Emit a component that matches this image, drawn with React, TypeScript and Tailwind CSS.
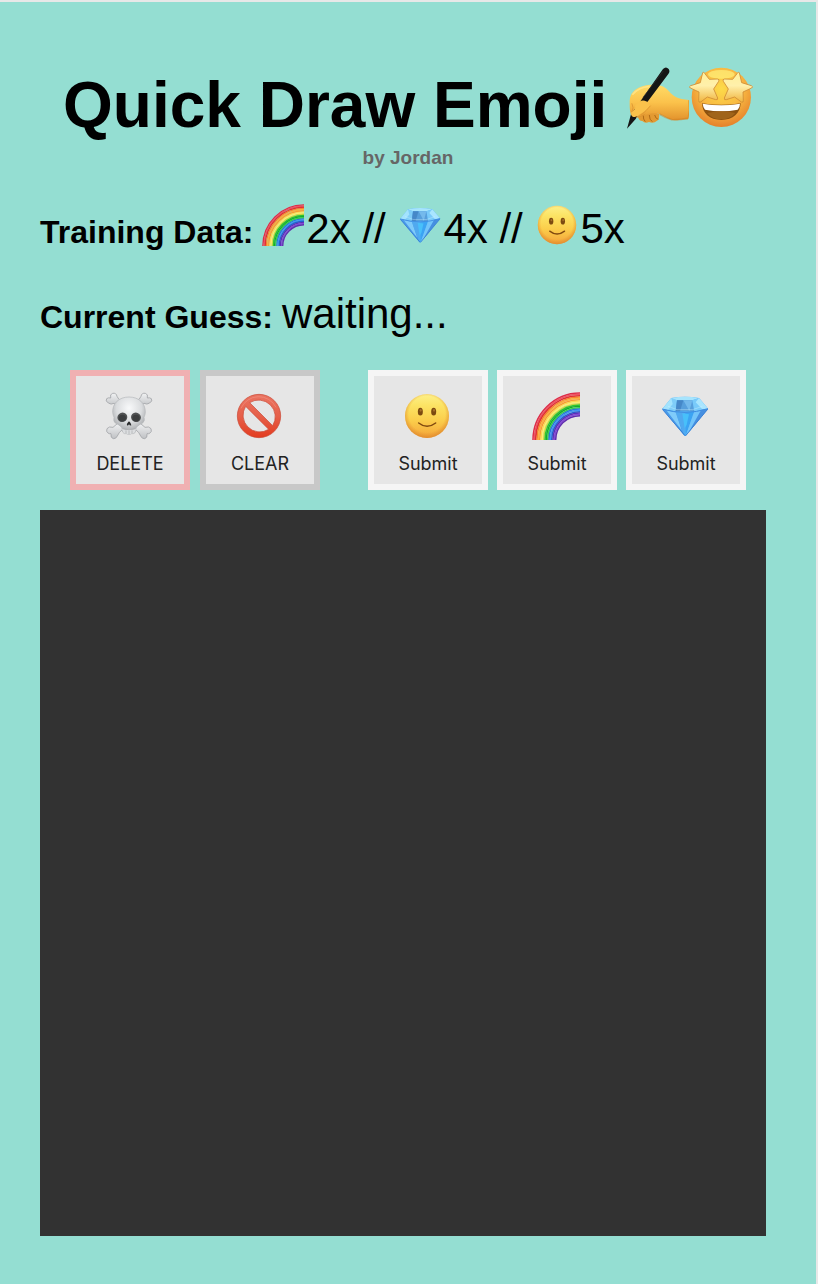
import { useId, type ReactNode } from "react";

type IconProps = { className?: string };

function Smile({ className = "" }: IconProps) {
  const id = useId();
  return (
    <svg viewBox="129 96 144 144" className={className} role="img" aria-label="Smile">
      <defs>
        <linearGradient id={id} x1="0" y1="0" x2="0" y2="1">
          <stop offset="0" stopColor="#fdf08a" />
          <stop offset="0.25" stopColor="#fce465" />
          <stop offset="0.6" stopColor="#fbce4b" />
          <stop offset="1" stopColor="#f3a33a" />
        </linearGradient>
        <radialGradient id={id + "e"} cx="0.5" cy="0.46" r="0.55">
          <stop offset="0.75" stopColor="#e0872a" stopOpacity="0" />
          <stop offset="1" stopColor="#d9822b" stopOpacity="0.75" />
        </radialGradient>
      </defs>
      <circle cx="201" cy="168" r="66" fill={`url(#${id})`} />
      <circle cx="201" cy="168" r="66" fill={`url(#${id}e)`} />
      <ellipse cx="181" cy="155" rx="7.5" ry="11.5" fill="#7c4a10" />
      <ellipse cx="221" cy="155" rx="7.5" ry="11.5" fill="#7c4a10" />
      <ellipse cx="182" cy="151" rx="3" ry="4" fill="#a8702a" />
      <ellipse cx="222" cy="151" rx="3" ry="4" fill="#a8702a" />
      <path d="M176 189Q201 209 227 189" fill="none" stroke="#80490f" strokeWidth="4.5" strokeLinecap="round" />
    </svg>
  );
}

const bands = [
  "#dc2c48", "#ef5362", "#e02d35", "#f5822f", "#fbb040", "#f79a32", "#fdd850", "#fdec74", "#c9dc45",
  "#2fc432", "#17aa2c", "#35cf49", "#2876d8", "#3f96f3", "#2260d0", "#5a2fb4", "#8448d8", "#5f2cae",
];

function Rainbow({ className = "" }: IconProps) {
  return (
    <svg viewBox="516 96 144 144" className={className} role="img" aria-label="Rainbow">
      {bands.map((color, i) => {
        const r = 141 - i * 4;
        return (
          <path
            key={color}
            d={`M${660 - r} 240A${r} ${r} 0 0 1 660 ${240 - r}`}
            fill="none"
            stroke={color}
            strokeWidth="4.6"
          />
        );
      })}
    </svg>
  );
}

function Gem({ className = "" }: IconProps) {
  return (
    <svg viewBox="183 96 144 144" className={className} role="img" aria-label="Diamond">
      <path d="M187 147L214 114Q255 106 297 114L324 146L257 228H254Z" fill="#56b0f4" />
      <path d="M187 147L214 114L231 121L227 154Z" fill="#7fcdf8" />
      <path d="M214 114Q255 106 297 114L277 121H231Z" fill="#a6e4fd" />
      <path d="M231 121H277L283 154H227Z" fill="#579fdc" />
      <path d="M277 121L297 114L324 146L283 154Z" fill="#79cafa" />
      <path d="M231 121L250 121L240 154H227Z" fill="#4688c8" />
      <path d="M250 121H277L268 154Q260 138 250 121Z" fill="#74b9ec" />
      <path d="M297 114L324 146L306 147L287 127Z" fill="#a9e5ff" />
      <path d="M187 147L214 114L218 132L204 150Z" fill="#a3e3fd" />
      <path d="M187 147L227 156L254 228Z" fill="#4a9ae9" />
      <path d="M199 151L227 157L245 211Z" fill="#7fcbfa" />
      <path d="M227 155L255 161L254 228Z" fill="#50a9ef" />
      <path d="M255 160L283 154L257 228Z" fill="#3ba4f3" />
      <path d="M247 160L267 163L260 194L254 205Z" fill="#48c0fa" />
      <path d="M283 154L324 146L257 228Z" fill="#73c5fa" />
      <path d="M303 151L324 146L266 217Z" fill="#468fe0" />
      <path d="M187 147Q255 168 324 146" fill="none" stroke="#3f8ce0" strokeWidth="3" />
      <path d="M188 149L255 227M323 148L257 227" fill="none" stroke="#3278d0" strokeWidth="2.5" />
      <path d="M204 139L231 149L278 149L307 139" fill="none" stroke="#d0f4ff" strokeWidth="2" opacity="0.6" />
    </svg>
  );
}

function Skull({ className = "" }: IconProps) {
  const id = useId();
  return (
    <svg viewBox="24 22 144 144" className={className} role="img" aria-label="Skull">
      <defs>
        <radialGradient id={id} cx="0.5" cy="0.3" r="0.7">
          <stop offset="0" stopColor="#f8f9fa" />
          <stop offset="0.55" stopColor="#dadcde" />
          <stop offset="1" stopColor="#97999c" />
        </radialGradient>
        <linearGradient id={id + "b"} x1="0" y1="0" x2="0" y2="1">
          <stop offset="0" stopColor="#f1f2f3" />
          <stop offset="1" stopColor="#bfc1c4" />
        </linearGradient>
      </defs>
      <g fill={`url(#${id}b)`} stroke="#a2a5a8" strokeWidth="2.5" strokeLinejoin="round">
        <path d="M65 66L51 56Q42 61 34 55Q24 49 29 42Q34 38 41 40Q38 28 47 26Q58 24 60 35Q63 43 75 52Z" />
        <path d="M127 66L141 56Q150 61 158 55Q168 49 163 42Q158 38 151 40Q154 28 145 26Q134 24 132 35Q129 43 117 52Z" />
        <path d="M62 116L48 128Q36 124 30 132Q26 141 34 146Q38 148 42 147Q40 160 49 162Q57 163 61 154Q64 144 79 132Z" />
        <path d="M130 116L144 128Q156 124 162 132Q166 141 158 146Q154 148 150 147Q152 160 143 162Q135 163 131 154Q128 144 113 132Z" />
      </g>
      <path
        d="M96 37C65 37 46 57 47 83Q48 92 51 98Q48 111 56 116Q65 120 74 126L77 142Q81 149 88 147Q96 151 104 147Q112 149 115 142L118 126Q127 120 136 116Q145 109 141 98Q145 89 145 82C145 56 126 37 96 37Z"
        fill={`url(#${id})`}
        stroke="#b4b6b9"
        strokeWidth="2"
      />
      <ellipse cx="76" cy="98" rx="15" ry="14" fill="#505253" transform="rotate(-20 76 98)" />
      <ellipse cx="117" cy="98" rx="15" ry="14" fill="#505253" transform="rotate(20 117 98)" />
      <ellipse cx="76" cy="100" rx="11" ry="10" fill="#3c3e3f" />
      <ellipse cx="117" cy="100" rx="11" ry="10" fill="#3c3e3f" />
      <path d="M96 110Q88 118 90 122Q93 124 96 119Q99 124 103 122Q104 117 96 110Z" fill="#292a2b" />
      <path
        d="M75 132Q96 139 117 132L114 142Q111 149 104 147Q96 151 88 147Q80 149 78 142Z"
        fill="#dcdee0"
      />
      <path d="M78 132Q96 139 114 132M87 137V147M96 138V148M105 137V147" fill="none" stroke="#a9abae" strokeWidth="2" />
    </svg>
  );
}

function Prohibited({ className = "" }: IconProps) {
  const id = useId();
  return (
    <svg viewBox="522 96 144 144" className={className} role="img" aria-label="Prohibited">
      <defs>
        <linearGradient id={id} x1="0" y1="0" x2="0" y2="1">
          <stop offset="0" stopColor="#ea7462" />
          <stop offset="0.5" stopColor="#e6604a" />
          <stop offset="1" stopColor="#e33c20" />
        </linearGradient>
      </defs>
      <path
        fillRule="evenodd"
        d="M594 103A65 65 0 1 1 594 233A65 65 0 1 1 594 103ZM566 128L635 197A50 50 0 0 0 566 128ZM554 139A50 50 0 0 0 623 208Z"
        fill={`url(#${id})`}
        stroke="#c94431"
        strokeWidth="2"
      />
      <path d="M540 145A58 58 0 0 1 645 142" fill="none" stroke="#f6a596" strokeWidth="3" opacity="0.4" />
    </svg>
  );
}

function WritingHand({ className = "" }: IconProps) {
  const id = useId();
  return (
    <svg viewBox="6 6 192 192" className={className} role="img" aria-label="Writing hand">
      <defs>
        <linearGradient id={id} x1="0" y1="0" x2="0" y2="1">
          <stop offset="0" stopColor="#ffdb67" />
          <stop offset="0.5" stopColor="#fbc24b" />
          <stop offset="1" stopColor="#e2922c" />
        </linearGradient>
      </defs>
      <path
        d="M44 148Q44 172 58 171Q66 179 78 174Q92 180 101 171Q111 166 108 150L80 138Z"
        fill="#e39a32"
      />
      <path
        d="M28 158C20 150 20 130 20 110C22 90 30 80 50 70C65 63 80 61 95 63C115 62 128 70 138 82C150 97 165 106 198 108C202 125 200 150 195 166C177 163 160 173 141 166C125 160 115 149 95 148C75 147 60 158 45 158C36 161 31 161 28 158Z"
        fill={`url(#${id})`}
      />
      <path d="M120 15Q129 6 137 15Q142 22 136 30L50 145L38 165L12 194L24 151L38 132Z" fill="#151515" />
      <path d="M121 21L60 100" fill="none" stroke="#303234" strokeWidth="2" />
      <path
        d="M39 122Q51 107 65 110Q83 115 80 127Q68 143 51 151Q41 162 29 158Q20 151 27 143Q39 137 36 126Z"
        fill="#fac14b"
      />
      <path d="M27 119Q34 132 27 143M55 153Q70 140 82 126M40 160Q55 159 66 151" fill="none" stroke="#dc9430" strokeWidth="2.5" strokeLinecap="round" />
      <path d="M61 155Q60 166 67 173M79 153Q79 168 88 173M95 153Q98 165 106 166" fill="none" stroke="#b06b17" strokeWidth="3" />
      <path d="M28 92Q45 70 80 67" fill="none" stroke="#ffe993" strokeWidth="5" opacity="0.7" />
      <path d="M110 151Q130 163 146 167Q170 168 194 163" fill="none" stroke="#cf7d1f" strokeWidth="5" opacity="0.5" />
      <path d="M197 109Q201 137 195 164" fill="none" stroke="#d68a27" strokeWidth="3" opacity="0.7" />
    </svg>
  );
}

function StarStruck({ className = "" }: IconProps) {
  const id = useId();
  return (
    <svg viewBox="237 33 192 192" className={className} role="img" aria-label="Star-struck">
      <defs>
        <radialGradient id={id} cx="0.5" cy="0.35" r="0.66">
          <stop offset="0" stopColor="#fddb49" />
          <stop offset="0.55" stopColor="#f8b842" />
          <stop offset="1" stopColor="#e47f2a" />
        </radialGradient>
        <linearGradient id={id + "s"} x1="0" y1="0" x2="0" y2="1">
          <stop offset="0" stopColor="#fff09a" />
          <stop offset="0.45" stopColor="#fff0ab" />
          <stop offset="1" stopColor="#f0b43e" />
        </linearGradient>
      </defs>
      <circle cx="334" cy="127" r="89" fill={`url(#${id})`} />
      <ellipse cx="334" cy="58" rx="40" ry="13" fill="#fff07a" opacity="0.7" />
      <path d="M276 145Q334 154 392 145C391 174 370 195 334 195C298 195 277 174 276 145Z" fill="#8b5110" />
      <path d="M278 146Q334 156 390 146Q390 157 383 164Q334 173 285 164Q279 157 278 146Z" fill="#ffffff" />
      <path d="M292 174Q334 163 376 174Q361 193 334 193Q306 193 292 174Z" fill="#a0641a" />
      <g fill={`url(#${id}s)`} stroke="#cf8b35" strokeWidth="2.5" strokeLinejoin="round">
        <path d="M278 53Q281 49 284 55L298 73L322 72Q330 73 326 79L311 102L323 129Q324 136 317 134L292 126L272 141Q265 144 266 136L267 111L241 99Q235 95 242 92L271 83Z" />
        <path d="M388 53Q385 49 382 55L368 73L344 72Q336 73 340 79L355 102L343 129Q342 136 349 134L374 126L394 141Q401 144 400 136L399 111L425 99Q431 95 424 92L395 83Z" />
      </g>
    </svg>
  );
}

const training = [
  { Icon: Rainbow, count: "2x" },
  { Icon: Gem, count: "4x" },
  { Icon: Smile, count: "5x" },
];

function Tile({ icon, border, children }: { icon: ReactNode; border: string; children: ReactNode }) {
  return (
    <button
      type="button"
      className={`flex size-[120px] shrink-0 flex-col items-center border-[6px] bg-[#e6e6e6] pt-4 font-[Inter,sans-serif] text-[18px] leading-6 text-[#222222] ${border}`}
    >
      <span className="mr-0.5">{icon}</span>
      <span className="mt-3">{children}</span>
    </button>
  );
}

export default function App() {
  return (
    <main className="min-h-screen border-t-2 border-r-2 border-[#e8e8e8] bg-[#94ded2] pt-16 pb-12 font-['Liberation_Sans',Arial,sans-serif] text-black">
      <header className="text-center">
        <h1 className="text-[64px] leading-[72px] font-bold">
          Quick Draw Emoji{" "}
          <span className="whitespace-nowrap">
            <WritingHand className="inline size-16 align-[-3px]" />
            <StarStruck className="inline size-16 align-[-3px]" />
          </span>
        </h1>
        <p className="mt-[5px] text-[19px] leading-6 font-bold text-[#666666]">by Jordan</p>
      </header>

      <section className="mt-[34px] pr-[50px] pl-10 text-[42px] leading-[48px]">
        <div className="flex flex-wrap items-baseline gap-[7px]">
          <h2 className="text-[32px] leading-10 font-bold">Training Data:</h2>
          <p>
            {training.map(({ Icon, count }, i) => (
              <span key={count}>
                {i > 0 && " // "}
                <Icon className="mx-0.5 inline size-[42px] align-[-3px]" />
                {count}
              </span>
            ))}
          </p>
        </div>
        <div className="mt-[37px] flex flex-wrap items-baseline gap-[9px]">
          <h2 className="text-[32px] leading-10 font-bold">Current Guess:</h2>
          <output>waiting...</output>
        </div>
      </section>

      <div className="mt-8 flex flex-wrap justify-center gap-x-12 gap-y-3">
        <div className="flex gap-2.5">
          <Tile border="border-[#f0b0b2]" icon={<Skull className="size-12" />}>DELETE</Tile>
          <Tile border="border-[#c8c8c8]" icon={<Prohibited className="size-12" />}>CLEAR</Tile>
        </div>
        <div className="flex gap-[9px]">
          <Tile border="border-[#f5f5f5]" icon={<Smile className="size-12" />}>Submit</Tile>
          <Tile border="border-[#f5f5f5]" icon={<Rainbow className="size-12" />}>Submit</Tile>
          <Tile border="border-[#f5f5f5]" icon={<Gem className="size-12" />}>Submit</Tile>
        </div>
      </div>

      <div className="mt-5 pr-[50px] pl-10">
        <canvas aria-label="Drawing area" className="block aspect-square w-full bg-[#323232]" />
      </div>
    </main>
  );
}
